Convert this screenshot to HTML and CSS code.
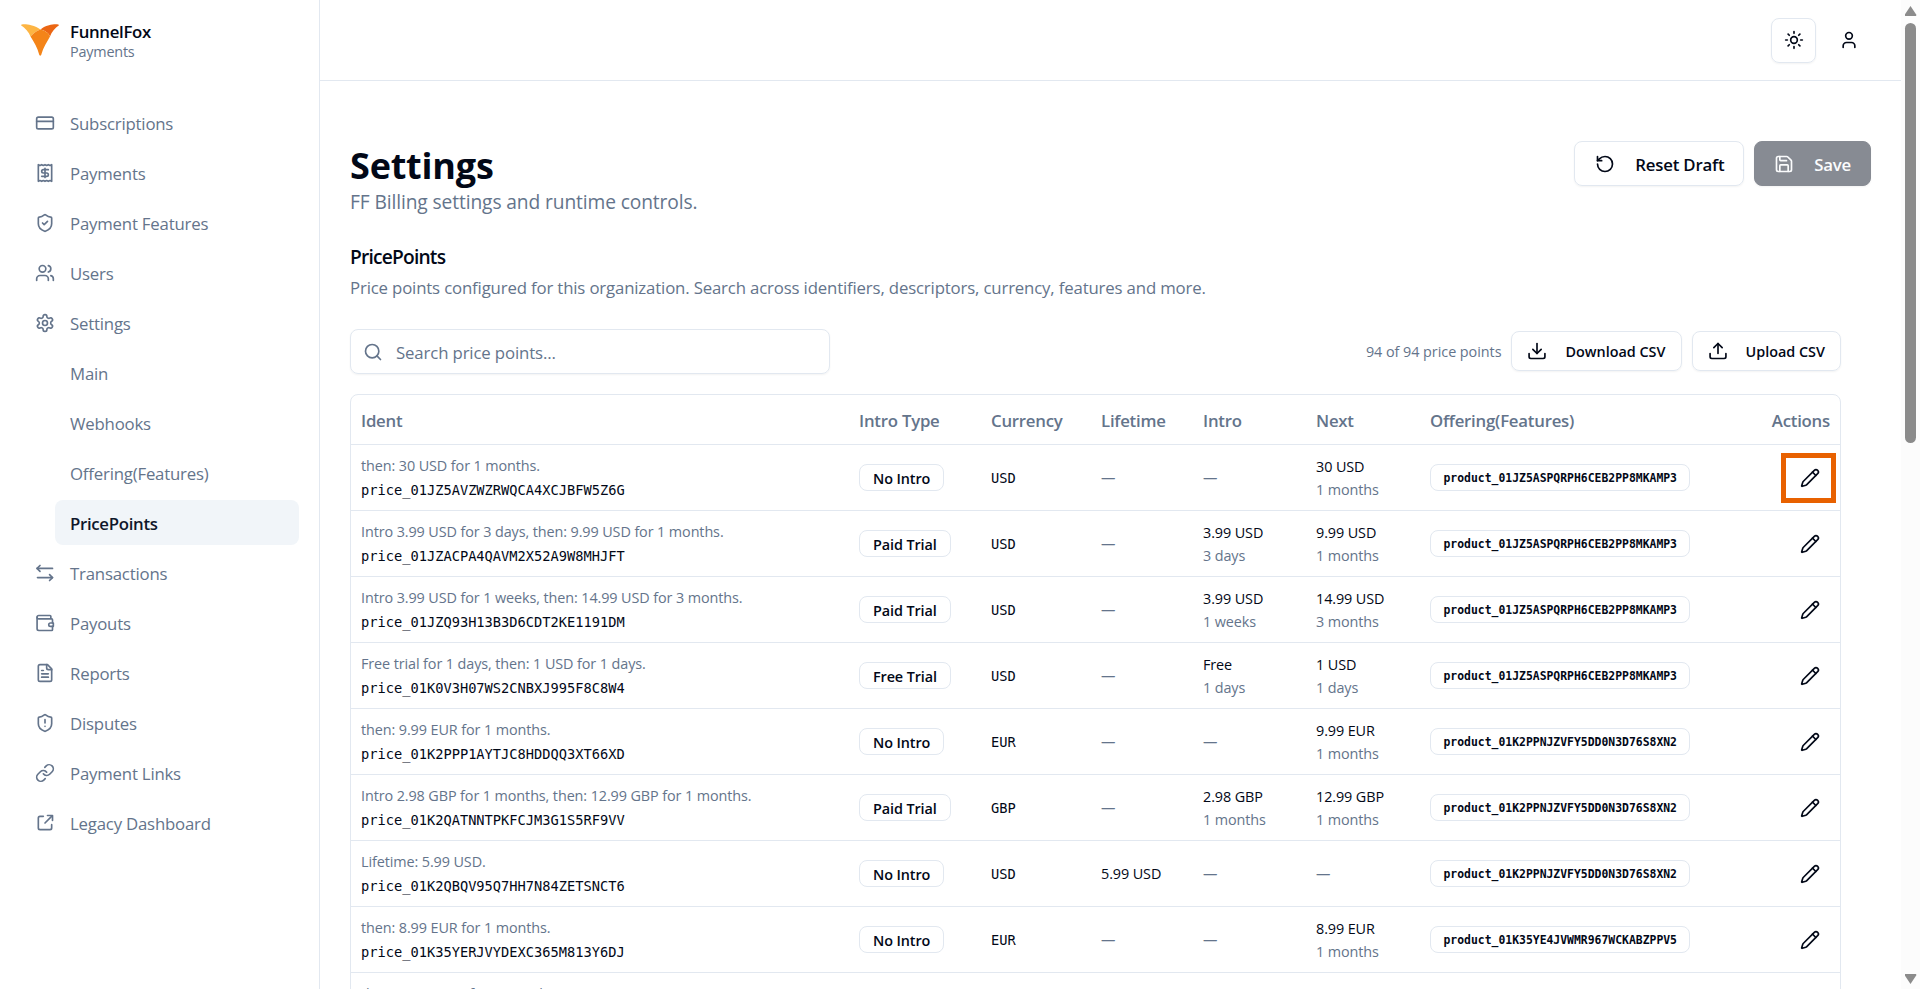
FILE: index.html
```html
<!DOCTYPE html>
<html lang="en">
<head>
    <meta charset="UTF-8">
    <meta name="viewport" content="width=device-width, initial-scale=1.0">
    <title>FunnelFox Payments - Settings</title>
    <link rel="stylesheet" href="styles.css">
</head>
<body>
    <!-- Shared icons -->
    <svg class="sprite" aria-hidden="true">
        <symbol id="i-pencil" viewBox="0 0 24 24">
            <path d="M21.174 6.812a1 1 0 0 0-3.986-3.987L3.842 16.174a2 2 0 0 0-.5.83l-1.321 4.352a.5.5 0 0 0 .623.622l4.353-1.32a2 2 0 0 0 .83-.497z"/>
            <path d="m15 5 4 4"/>
        </symbol>
    </svg>

    <div class="app">
        <aside class="sidebar">
            <div class="brand">
                <svg class="logo" viewBox="0 0 38 32">
                    <path fill="#fdb544" d="M0 1.2C0 0 6 .2 10 1.2C14 2.200 17 3.600 19.500 5.400C15 7 12 9.500 9.500 12.500C8 8 4 4 0 1.200z"/>
                    <path fill="#eb6613" d="M38 1.200C38 0 32 .2 28 1.200C24 2.200 21.500 3.600 19.500 5.400C24 6.500 28 9 29 12.500C30.500 8 34 4 38 1.200z"/>
                    <path fill="#f48418" d="M19.500 5.400C24 6.500 28 9 29 12.500C26 18 22 24 20.500 30C20 32.300 18.500 32.300 18 30C16.500 24 13 18 9.500 12.500C12 9.500 15 7 19.500 5.400z"/>
                </svg>
                <div>
                    <div class="brand-name">FunnelFox</div>
                    <div class="brand-sub">Payments</div>
                </div>
            </div>

            <nav class="nav">
                <a class="nav-item">
                    <svg class="icon" viewBox="0 0 24 24"><rect width="20" height="14" x="2" y="5" rx="2"/><path d="M2 10h20"/></svg>
                    <span>Subscriptions</span>
                </a>
                <a class="nav-item">
                    <svg class="icon" viewBox="0 0 24 24"><path d="M4 2v20l2-1 2 1 2-1 2 1 2-1 2 1 2-1 2 1V2l-2 1-2-1-2 1-2-1-2 1-2-1-2 1Z"/><path d="M16 8h-6a2 2 0 1 0 0 4h4a2 2 0 1 1 0 4H8"/><path d="M12 17.500v-11"/></svg>
                    <span>Payments</span>
                </a>
                <a class="nav-item">
                    <svg class="icon" viewBox="0 0 24 24"><path d="M20 13c0 5-3.500 7.500-7.660 8.950a1 1 0 0 1-.67-.01C7.500 20.500 4 18 4 13V6a1 1 0 0 1 1-1c2 0 4.500-1.200 6.240-2.720a1.170 1.170 0 0 1 1.520 0C14.510 3.810 17 5 19 5a1 1 0 0 1 1 1z"/><path d="m9 12 2 2 4-4"/></svg>
                    <span>Payment Features</span>
                </a>
                <a class="nav-item">
                    <svg class="icon" viewBox="0 0 24 24"><path d="M16 21v-2a4 4 0 0 0-4-4H6a4 4 0 0 0-4 4v2"/><circle cx="9" cy="7" r="4"/><path d="M22 21v-2a4 4 0 0 0-3-3.870"/><path d="M16 3.130a4 4 0 0 1 0 7.750"/></svg>
                    <span>Users</span>
                </a>
                <a class="nav-item">
                    <svg class="icon" viewBox="0 0 24 24"><path d="M12.220 2h-.44a2 2 0 0 0-2 2v.18a2 2 0 0 1-1 1.730l-.43.25a2 2 0 0 1-2 0l-.15-.08a2 2 0 0 0-2.730.73l-.22.38a2 2 0 0 0 .73 2.730l.15.1a2 2 0 0 1 1 1.720v.51a2 2 0 0 1-1 1.740l-.15.09a2 2 0 0 0-.73 2.730l.22.38a2 2 0 0 0 2.730.73l.15-.08a2 2 0 0 1 2 0l.43.25a2 2 0 0 1 1 1.730V20a2 2 0 0 0 2 2h.44a2 2 0 0 0 2-2v-.18a2 2 0 0 1 1-1.730l.43-.25a2 2 0 0 1 2 0l.15.08a2 2 0 0 0 2.730-.73l.22-.39a2 2 0 0 0-.73-2.730l-.15-.08a2 2 0 0 1-1-1.740v-.5a2 2 0 0 1 1-1.740l.15-.09a2 2 0 0 0 .73-2.730l-.22-.38a2 2 0 0 0-2.730-.73l-.15.08a2 2 0 0 1-2 0l-.43-.25a2 2 0 0 1-1-1.730V4a2 2 0 0 0-2-2z"/><circle cx="12" cy="12" r="3"/></svg>
                    <span>Settings</span>
                </a>
                <a class="nav-item sub">Main</a>
                <a class="nav-item sub">Webhooks</a>
                <a class="nav-item sub">Offering(Features)</a>
                <a class="nav-item sub active">PricePoints</a>
                <a class="nav-item">
                    <svg class="icon" viewBox="0 0 24 24"><path d="M6 3 2.500 6.500 6 10"/><path d="M2.500 6.500H21"/><path d="m17.500 14 3.500 3.500-3.500 3.500"/><path d="M21 17.500H3"/></svg>
                    <span>Transactions</span>
                </a>
                <a class="nav-item">
                    <svg class="icon" viewBox="0 0 24 24"><path d="M19 7V4a1 1 0 0 0-1-1H4.500a2 2 0 0 0 0 4H20a1 1 0 0 1 1 1v4"/><path d="M2.500 5v14a2 2 0 0 0 2 2H20a1 1 0 0 0 1-1v-4"/><path d="M22 12h-3.500a2 2 0 0 0 0 4H22z"/></svg>
                    <span>Payouts</span>
                </a>
                <a class="nav-item">
                    <svg class="icon" viewBox="0 0 24 24"><path d="M15 2H6a2 2 0 0 0-2 2v16a2 2 0 0 0 2 2h12a2 2 0 0 0 2-2V7Z"/><path d="M14 2v4a2 2 0 0 0 2 2h4"/><path d="M10 9H8"/><path d="M16 13H8"/><path d="M16 17H8"/></svg>
                    <span>Reports</span>
                </a>
                <a class="nav-item">
                    <svg class="icon" viewBox="0 0 24 24"><path d="M20 13c0 5-3.500 7.500-7.660 8.950a1 1 0 0 1-.67-.01C7.500 20.500 4 18 4 13V6a1 1 0 0 1 1-1c2 0 4.500-1.200 6.240-2.720a1.170 1.170 0 0 1 1.520 0C14.510 3.810 17 5 19 5a1 1 0 0 1 1 1z"/><path d="M12 8v4"/><path d="M12 16h.01"/></svg>
                    <span>Disputes</span>
                </a>
                <a class="nav-item">
                    <svg class="icon" viewBox="0 0 24 24"><path d="M10 13a5 5 0 0 0 7.540.54l3-3a5 5 0 0 0-7.070-7.070l-1.720 1.710"/><path d="M14 11a5 5 0 0 0-7.540-.54l-3 3a5 5 0 0 0 7.070 7.070l1.710-1.710"/></svg>
                    <span>Payment Links</span>
                </a>
                <a class="nav-item">
                    <svg class="icon" viewBox="0 0 24 24"><path d="M10 4H6a2 2 0 0 0-2 2v12a2 2 0 0 0 2 2h12a2 2 0 0 0 2-2v-4"/><path d="M15 3h6v6"/><path d="M12 12 20.500 3.500"/></svg>
                    <span>Legacy Dashboard</span>
                </a>
            </nav>
        </aside>

        <div class="main">
            <header class="topbar">
                <button class="icon-btn bordered">
                    <svg class="icon" viewBox="0 0 24 24"><circle cx="12" cy="12" r="4"/><path d="M12 2v2"/><path d="M12 20v2"/><path d="m4.930 4.930 1.410 1.410"/><path d="m17.660 17.660 1.410 1.410"/><path d="M2 12h2"/><path d="M20 12h2"/><path d="m6.340 17.660-1.410 1.410"/><path d="m19.070 4.930-1.410 1.410"/></svg>
                </button>
                <button class="icon-btn">
                    <svg class="icon" viewBox="0 0 24 24"><path d="M19 21v-2a4 4 0 0 0-4-4H9a4 4 0 0 0-4 4v2"/><circle cx="12" cy="7" r="4"/></svg>
                </button>
            </header>

            <main class="content">
                <div class="page-head">
                    <div class="page-title">
                        <h1>Settings</h1>
                        <p>FF Billing settings and runtime controls.</p>
                    </div>
                    <div class="page-actions">
                        <button class="btn">
                            <svg class="icon" viewBox="0 0 24 24"><path d="M3 12a9 9 0 1 0 9-9 9.750 9.750 0 0 0-6.740 2.740L3 8"/><path d="M3 3v5h5"/></svg>
                            <span>Reset Draft</span>
                        </button>
                        <button class="btn btn-save">
                            <svg class="icon" viewBox="0 0 24 24"><path d="M15.200 3a2 2 0 0 1 1.400.6l3.800 3.800a2 2 0 0 1 .6 1.400V19a2 2 0 0 1-2 2H5a2 2 0 0 1-2-2V5a2 2 0 0 1 2-2z"/><path d="M17 21v-7a1 1 0 0 0-1-1H8a1 1 0 0 0-1 1v7"/><path d="M7 3v4a1 1 0 0 0 1 1h7"/></svg>
                            <span>Save</span>
                        </button>
                    </div>
                </div>

                <section class="section">
                    <h2>PricePoints</h2>
                    <p class="section-desc">Price points configured for this organization. Search across identifiers, descriptors, currency, features and more.</p>

                    <div class="toolbar">
                        <div class="search">
                            <svg class="icon" viewBox="0 0 24 24"><circle cx="11" cy="11" r="8"/><path d="m21 21-4.300-4.300"/></svg>
                            <input type="text" placeholder="Search price points...">
                        </div>
                        <div class="toolbar-right">
                            <span class="count">94 of 94 price points</span>
                            <button class="btn btn-sm">
                                <svg class="icon" viewBox="0 0 24 24"><path d="M12 15V3"/><path d="m7 10 5 5 5-5"/><path d="M2.500 15v4a2 2 0 0 0 2 2h15a2 2 0 0 0 2-2v-4"/></svg>
                                <span>Download CSV</span>
                            </button>
                            <button class="btn btn-sm">
                                <svg class="icon" viewBox="0 0 24 24"><path d="M12 3v12"/><path d="m17 8-5-5-5 5"/><path d="M2.500 15v4a2 2 0 0 0 2 2h15a2 2 0 0 0 2-2v-4"/></svg>
                                <span>Upload CSV</span>
                            </button>
                        </div>
                    </div>

                    <div class="table-wrap">
                        <table>
                            <colgroup>
                                <col class="c-ident">
                                <col class="c-type">
                                <col class="c-currency">
                                <col class="c-lifetime">
                                <col class="c-intro">
                                <col class="c-next">
                                <col class="c-offering">
                                <col class="c-actions">
                            </colgroup>
                            <thead>
                                <tr>
                                    <th>Ident</th>
                                    <th>Intro Type</th>
                                    <th>Currency</th>
                                    <th>Lifetime</th>
                                    <th>Intro</th>
                                    <th>Next</th>
                                    <th>Offering(Features)</th>
                                    <th class="right">Actions</th>
                                </tr>
                            </thead>
                            <tbody>
                                <tr>
                                    <td><div class="desc">then: 30 USD for 1 months.</div><div class="ident">price_01JZ5AVZWZRWQCA4XCJBFW5Z6G</div></td>
                                    <td><span class="badge">No Intro</span></td>
                                    <td class="mono">USD</td>
                                    <td class="muted">—</td>
                                    <td class="muted">—</td>
                                    <td><div class="amount">30 USD</div><div class="period">1 months</div></td>
                                    <td><span class="badge product">product_01JZ5ASPQRPH6CEB2PP8MKAMP3</span></td>
                                    <td class="right"><button class="edit-btn highlighted"><svg class="icon"><use href="#i-pencil"/></svg></button></td>
                                </tr>
                                <tr>
                                    <td><div class="desc">Intro 3.99 USD for 3 days, then: 9.99 USD for 1 months.</div><div class="ident">price_01JZACPA4QAVM2X52A9W8MHJFT</div></td>
                                    <td><span class="badge">Paid Trial</span></td>
                                    <td class="mono">USD</td>
                                    <td class="muted">—</td>
                                    <td><div class="amount">3.99 USD</div><div class="period">3 days</div></td>
                                    <td><div class="amount">9.99 USD</div><div class="period">1 months</div></td>
                                    <td><span class="badge product">product_01JZ5ASPQRPH6CEB2PP8MKAMP3</span></td>
                                    <td class="right"><button class="edit-btn"><svg class="icon"><use href="#i-pencil"/></svg></button></td>
                                </tr>
                                <tr>
                                    <td><div class="desc">Intro 3.99 USD for 1 weeks, then: 14.99 USD for 3 months.</div><div class="ident">price_01JZQ93H13B3D6CDT2KE1191DM</div></td>
                                    <td><span class="badge">Paid Trial</span></td>
                                    <td class="mono">USD</td>
                                    <td class="muted">—</td>
                                    <td><div class="amount">3.99 USD</div><div class="period">1 weeks</div></td>
                                    <td><div class="amount">14.99 USD</div><div class="period">3 months</div></td>
                                    <td><span class="badge product">product_01JZ5ASPQRPH6CEB2PP8MKAMP3</span></td>
                                    <td class="right"><button class="edit-btn"><svg class="icon"><use href="#i-pencil"/></svg></button></td>
                                </tr>
                                <tr>
                                    <td><div class="desc">Free trial for 1 days, then: 1 USD for 1 days.</div><div class="ident">price_01K0V3H07WS2CNBXJ995F8C8W4</div></td>
                                    <td><span class="badge">Free Trial</span></td>
                                    <td class="mono">USD</td>
                                    <td class="muted">—</td>
                                    <td><div class="amount">Free</div><div class="period">1 days</div></td>
                                    <td><div class="amount">1 USD</div><div class="period">1 days</div></td>
                                    <td><span class="badge product">product_01JZ5ASPQRPH6CEB2PP8MKAMP3</span></td>
                                    <td class="right"><button class="edit-btn"><svg class="icon"><use href="#i-pencil"/></svg></button></td>
                                </tr>
                                <tr>
                                    <td><div class="desc">then: 9.99 EUR for 1 months.</div><div class="ident">price_01K2PPP1AYTJC8HDDQQ3XT66XD</div></td>
                                    <td><span class="badge">No Intro</span></td>
                                    <td class="mono">EUR</td>
                                    <td class="muted">—</td>
                                    <td class="muted">—</td>
                                    <td><div class="amount">9.99 EUR</div><div class="period">1 months</div></td>
                                    <td><span class="badge product">product_01K2PPNJZVFY5DD0N3D76S8XN2</span></td>
                                    <td class="right"><button class="edit-btn"><svg class="icon"><use href="#i-pencil"/></svg></button></td>
                                </tr>
                                <tr>
                                    <td><div class="desc">Intro 2.98 GBP for 1 months, then: 12.99 GBP for 1 months.</div><div class="ident">price_01K2QATNNTPKFCJM3G1S5RF9VV</div></td>
                                    <td><span class="badge">Paid Trial</span></td>
                                    <td class="mono">GBP</td>
                                    <td class="muted">—</td>
                                    <td><div class="amount">2.98 GBP</div><div class="period">1 months</div></td>
                                    <td><div class="amount">12.99 GBP</div><div class="period">1 months</div></td>
                                    <td><span class="badge product">product_01K2PPNJZVFY5DD0N3D76S8XN2</span></td>
                                    <td class="right"><button class="edit-btn"><svg class="icon"><use href="#i-pencil"/></svg></button></td>
                                </tr>
                                <tr>
                                    <td><div class="desc">Lifetime: 5.99 USD.</div><div class="ident">price_01K2QBQV95Q7HH7N84ZETSNCT6</div></td>
                                    <td><span class="badge">No Intro</span></td>
                                    <td class="mono">USD</td>
                                    <td><div class="amount">5.99 USD</div></td>
                                    <td class="muted">—</td>
                                    <td class="muted">—</td>
                                    <td><span class="badge product">product_01K2PPNJZVFY5DD0N3D76S8XN2</span></td>
                                    <td class="right"><button class="edit-btn"><svg class="icon"><use href="#i-pencil"/></svg></button></td>
                                </tr>
                                <tr>
                                    <td><div class="desc">then: 8.99 EUR for 1 months.</div><div class="ident">price_01K35YERJVYDEXC365M813Y6DJ</div></td>
                                    <td><span class="badge">No Intro</span></td>
                                    <td class="mono">EUR</td>
                                    <td class="muted">—</td>
                                    <td class="muted">—</td>
                                    <td><div class="amount">8.99 EUR</div><div class="period">1 months</div></td>
                                    <td><span class="badge product">product_01K35YE4JVWMR967WCKABZPPV5</span></td>
                                    <td class="right"><button class="edit-btn"><svg class="icon"><use href="#i-pencil"/></svg></button></td>
                                </tr>
                                <tr class="row-partial">
                                    <td><div class="desc">then: 11.99 EUR for 1 months.</div></td>
                                    <td></td>
                                    <td></td>
                                    <td></td>
                                    <td></td>
                                    <td></td>
                                    <td></td>
                                    <td></td>
                                </tr>
                            </tbody>
                        </table>
                    </div>
                </section>
            </main>
        </div>

        <div class="scrollbar">
            <span class="arrow up"></span>
            <span class="thumb"></span>
            <span class="arrow down"></span>
        </div>
    </div>
</body>
</html>
```
FILE: styles.css
```css
*, *::after {
    margin: 0;
    padding: 0;
    box-sizing: border-box;
}

body {
    font-family: 'Open Sans', 'Noto Sans', sans-serif;
    font-size: 16.8px;
    line-height: 25px;
    letter-spacing: -0.2px;
    color: #020817;
    background: #fff;
    height: 100vh;
    overflow: hidden;
}

button {
    font-family: inherit;
    color: inherit;
    background: none;
    border: none;
}

.sprite {
    display: none;
}

.icon {
    width: 20px;
    height: 20px;
    flex-shrink: 0;
    fill: none;
    stroke: currentColor;
    stroke-width: 2;
    stroke-linecap: round;
    stroke-linejoin: round;
}

.app {
    display: flex;
    height: 100vh;
    overflow: hidden;
}

/* Sidebar */
.sidebar {
    width: 320px;
    flex-shrink: 0;
    border-right: 1px solid #e2e8f0;
}

.brand {
    display: flex;
    gap: 11px;
    padding: 20px 21px 0;
    height: 100px;
}

.logo {
    width: 38px;
    height: 32px;
    margin-top: 4px;
}

.brand-name {
    font-weight: 600;
    line-height: 22px;
    letter-spacing: -0.3px;
    padding-top: 1px;
}

.brand-sub {
    font-size: 14.4px;
    line-height: 18px;
    color: #64748b;
}

.nav {
    display: flex;
    flex-direction: column;
    gap: 5px;
    padding: 0 20px;
}

.nav-item {
    display: flex;
    align-items: center;
    gap: 15px;
    height: 45px;
    padding: 0 15px;
    border-radius: 8px;
    color: #64748b;
}

.nav-item span {
    padding-top: 2px;
}

.nav-item.sub {
    margin-left: 35px;
    padding-top: 2px;
}

.nav-item.active {
    background: #f1f5f9;
    color: #0f172a;
    font-weight: 600;
    letter-spacing: -0.3px;
}

/* Header */
.main {
    flex: 1;
    min-width: 0;
}

.topbar {
    display: flex;
    justify-content: flex-end;
    gap: 10px;
    height: 81px;
    padding: 18px 30px 0;
    border-bottom: 1px solid #e2e8f0;
}

.icon-btn {
    display: flex;
    align-items: center;
    justify-content: center;
    width: 45px;
    height: 45px;
    padding-bottom: 1px;
    border-radius: 8px;
}

.icon-btn.bordered {
    border: 1px solid #e2e8f0;
    box-shadow: 0 1px 2px rgba(0, 0, 0, 0.05);
}

/* Page */
.content {
    padding: 60px 30px 0;
}

.page-head {
    display: flex;
    justify-content: space-between;
    align-items: flex-start;
}

.page-title {
    padding-top: 2px;
}

h1 {
    font-size: 36px;
    line-height: 45px;
    font-weight: 700;
    letter-spacing: -0.2px;
}

.page-title p {
    margin-bottom: 2px;
    font-size: 19.2px;
    line-height: 28px;
    letter-spacing: -0.11px;
    color: #64748b;
}

.page-actions {
    display: flex;
    gap: 10px;
}

.btn {
    display: flex;
    align-items: center;
    gap: 20px;
    height: 45px;
    padding: 0 19px 0 20px;
    border: 1px solid #e2e8f0;
    border-radius: 8px;
    font-size: 16.8px;
    font-weight: 600;
    letter-spacing: -0.18px;
    box-shadow: 0 1px 2px rgba(0, 0, 0, 0.05);
}

.btn span {
    padding-top: 1px;
}

.btn-save {
    padding: 0 19px;
    background: #878b93;
    border-color: #878b93;
    color: #fbfcfd;
    letter-spacing: -0.24px;
}

.btn-sm {
    gap: 18px;
    height: 40px;
    padding: 0 15px;
    font-size: 14.4px;
    letter-spacing: 0;
}

.section {
    margin-top: 26px;
}

h2 {
    font-size: 19.2px;
    line-height: 25px;
    font-weight: 600;
    letter-spacing: -0.8px;
}

.section-desc {
    margin-top: 4px;
    line-height: 30px;
    letter-spacing: -0.16px;
    color: #64748b;
}

.toolbar {
    display: flex;
    justify-content: space-between;
    align-items: flex-start;
    margin-top: 26px;
    margin-right: 30px;
}

.search {
    display: flex;
    align-items: center;
    gap: 13px;
    width: 480px;
    height: 45px;
    padding: 0 12px;
    border: 1px solid #e2e8f0;
    border-radius: 8px;
    color: #64748b;
    box-shadow: 0 1px 2px rgba(0, 0, 0, 0.05);
}

.search input {
    flex: 1;
    padding-top: 2px;
    border: none;
    outline: none;
    background: none;
    font: inherit;
    letter-spacing: -0.14px;
}

.search input::placeholder {
    color: #64748b;
}

.toolbar-right {
    display: flex;
    align-items: center;
    gap: 10px;
    padding-top: 2px;
}

.count {
    font-size: 14.4px;
    letter-spacing: -0.05px;
    color: #64748b;
}

/* Table */
.table-wrap {
    margin: 20px 30px 0 0;
    border: 1px solid #e2e8f0;
    border-radius: 8px;
}

table {
    width: 100%;
    table-layout: fixed;
    border-collapse: separate;
    border-spacing: 0;
}

.c-ident { width: 498px; }
.c-type { width: 132px; }
.c-currency { width: 110px; }
.c-lifetime { width: 102px; }
.c-intro { width: 113px; }
.c-next { width: 114px; }
.c-offering { width: 290px; }

th {
    height: 50px;
    padding: 2px 10px 0;
    border-bottom: 1px solid #e2e8f0;
    color: #64748b;
    font-weight: 600;
    letter-spacing: -0.23px;
    text-align: left;
}

td {
    height: 66px;
    padding: 0 10px;
    border-bottom: 1px solid #e2e8f0;
    font-size: 14.4px;
    line-height: 23px;
    letter-spacing: -0.1px;
}

.row-partial td {
    padding-top: 8px;
    vertical-align: top;
}

.right {
    text-align: right;
}

.desc, .period, .muted {
    color: #64748b;
}

.desc {
    padding-top: 2px;
    line-height: 22px;
}

.ident, .mono {
    padding-top: 2px;
    font-family: 'DejaVu Sans Mono', monospace;
    font-size: 13.7px;
    letter-spacing: 0;
}

.badge {
    display: inline-flex;
    align-items: center;
    height: 27px;
    padding: 1px 13px 0;
    border: 1px solid #e2e8f0;
    border-radius: 8px;
    font-weight: 600;
    vertical-align: middle;
}

.badge.product {
    padding: 1px 12.5px 0;
    font-family: 'DejaVu Sans Mono', monospace;
    font-size: 11.42px;
    font-weight: 700;
    letter-spacing: 0;
}

.edit-btn {
    position: relative;
    display: inline-flex;
    align-items: center;
    justify-content: center;
    width: 40px;
    height: 40px;
    vertical-align: middle;
}

/* Marker box drawn round the button */
.edit-btn.highlighted::after {
    content: '';
    position: absolute;
    top: -5px;
    left: -9px;
    width: 55px;
    height: 50px;
    border: 5px solid #e86100;
}

/* Scrollbar */
.scrollbar {
    display: flex;
    flex-direction: column;
    align-items: center;
    width: 19px;
    flex-shrink: 0;
    padding: 6px 0 5px;
    background: #fcfcfc;
}

.thumb {
    width: 11px;
    height: 420px;
    margin-top: 7px;
    border-radius: 6px;
    background: #8b8b8b;
}

.arrow {
    width: 12px;
    height: 10px;
    background: #8b8b8b;
}

.arrow.up {
    clip-path: polygon(50% 0, 100% 90%, 95% 100%, 5% 100%, 0 90%);
}

.arrow.down {
    margin-top: auto;
    clip-path: polygon(5% 0, 95% 0, 100% 10%, 50% 100%, 0 10%);
}
```
